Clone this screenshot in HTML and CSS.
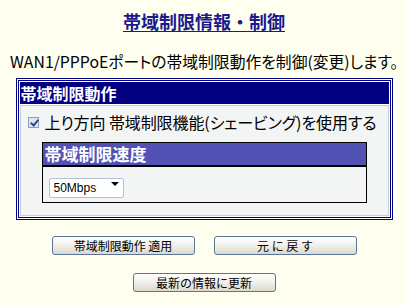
FILE: index.html
```html
<!DOCTYPE html>
<html lang="ja">

<head>
    <meta charset="UTF-8">
    <meta name="viewport" content="width=device-width, initial-scale=1.0">
    <title>帯域制限情報・制御</title>

    <link rel="stylesheet" href="styles.css">
</head>

<body>
    <h1 class="page-title"><a href="#">帯域制限情報・制御</a></h1>
    <p class="lead">WAN1/PPPoEポートの帯域制限動作を制御(変更)します。</p>

    <form autocomplete="off">
        <div class="panel">
            <div class="panel-head">帯域制限動作</div>
            <div class="panel-body">
                <label class="check-row">
                    <input type="checkbox" checked>
                    <span class="check"></span>
                    <span>上り方向 帯域制限機能(シェービング)を使用する</span>
                </label>

                <div class="sub-panel">
                    <div class="sub-head">帯域制限速度</div>
                    <div class="sub-body">
                        <div class="select-wrap">
                            <select name="rate">
                                <option>50Mbps</option>
                                <option>10Mbps</option>
                                <option>100Mbps</option>
                            </select>
                        </div>
                    </div>
                </div>
            </div>
        </div>

        <div class="button-row">
            <button type="submit">帯域制限動作 適用</button>
            <button type="reset">元 に 戻 す</button>
        </div>
        <div class="button-row">
            <button type="button">最新の情報に更新</button>
        </div>
    </form>
</body>

</html>
```

FILE: styles.css
```css
* {
    margin: 0;
    padding: 0;
    box-sizing: border-box;
}

body {
    margin: 0 8px 0 10px;
    background-color: #fffff0;
    font-family: "Noto Sans CJK JP", "Noto Sans", sans-serif;
    font-feature-settings: "palt";
    color: #000;
}

.page-title {
    margin-top: 10px;
    text-align: center;
    font-size: 18px;
    line-height: 22px;
    font-weight: bold;
    font-feature-settings: normal;
}

.page-title a {
    color: #1a1a8c;
    text-decoration: underline;
    text-underline-offset: 2px;
}

.lead {
    margin-top: 20px;
    text-align: center;
    font-size: 15.8px;
    line-height: 20px;
    white-space: nowrap;
}

.panel {
    width: 377px;
    margin: 6px auto 0 auto;
    border: 3px double #000080;
    padding: 1px;
    background-color: #fff;
    display: flex;
    flex-direction: column;
    gap: 1px;
}

.panel-head {
    height: 22px;
    padding-left: 1px;
    background-color: #000080;
    color: #fff;
    font-size: 16px;
    line-height: 22px;
    font-weight: bold;
}

.panel-body {
    border: 1px solid #c4ccd4;
    background-color: #f3f5f5;
    padding: 6px 0 12px 0;
}

.check-row {
    display: flex;
    align-items: center;
    gap: 6px;
    height: 20px;
    padding-left: 7px;
    font-size: 16px;
    line-height: 20px;
    letter-spacing: -0.1px;
    white-space: nowrap;
}

.check-row input {
    display: none;
}

.check {
    flex-shrink: 0;
    width: 11px;
    height: 11px;
    border: 1px solid #8aa0b8;
    background-color: #dfe6ee;
    position: relative;
}

.check::after {
    content: "";
    position: absolute;
    left: 3px;
    top: 0px;
    width: 3px;
    height: 6px;
    border: solid #2c4a9a;
    border-width: 0 2px 2px 0;
    transform: rotate(40deg);
}

.sub-panel {
    margin: 10px 21px 0 21px;
    border: 1px solid #000;
}

.sub-head {
    height: 22px;
    padding-left: 2px;
    background-color: #5252b4;
    border-bottom: 2px solid #000;
    color: #fff;
    font-size: 17px;
    line-height: 22px;
    font-weight: bold;
    box-sizing: content-box;
}

.sub-body {
    padding: 6px 6px 9px 6px;
}

.select-wrap {
    position: relative;
    width: 75px;
    height: 20px;
}

.select-wrap select {
    appearance: none;
    width: 100%;
    height: 100%;
    border: 1px solid #b4c2d4;
    border-radius: 2px;
    background-color: #fff;
    padding-left: 4px;
    font-family: "Liberation Sans", Arial, sans-serif;
    font-size: 12px;
    color: #000;
    outline: none;
}

.select-wrap::after {
    content: "";
    position: absolute;
    right: 5px;
    top: 9px;
    border-left: 4px solid transparent;
    border-right: 4px solid transparent;
    border-top: 4px solid #000;
    pointer-events: none;
}

.button-row {
    display: flex;
    justify-content: center;
    gap: 19px;
    margin-top: 16px;
}

.button-row + .button-row {
    margin-top: 18px;
}

button {
    width: 143px;
    height: 19px;
    border: 1px solid #5a7696;
    border-radius: 3px;
    background: linear-gradient(#ffffff, #f2f1ec 45%, #dcd8ce);
    font-family: "Noto Sans CJK JP", sans-serif;
    font-size: 12px;
    line-height: 17px;
    color: #000;
    cursor: pointer;
}
```
